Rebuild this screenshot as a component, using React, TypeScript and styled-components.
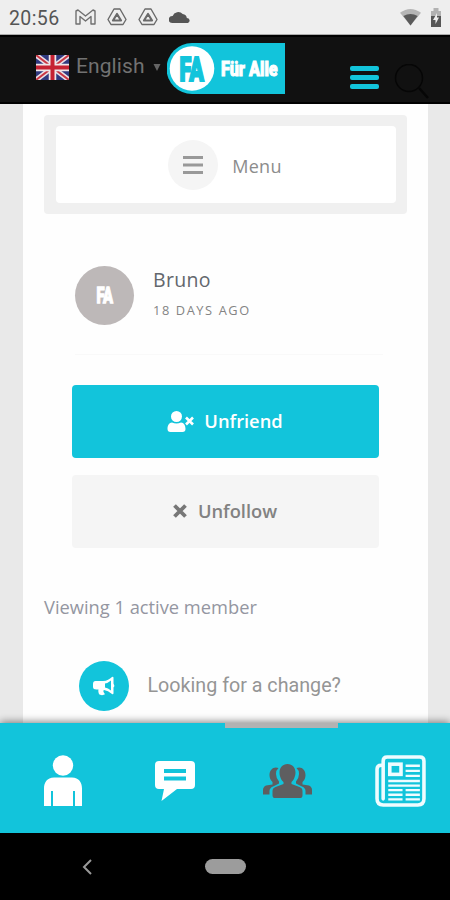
import React from "react";
import styled, { createGlobalStyle } from "styled-components";

const cyan = "#12c4db";

const GlobalStyle = createGlobalStyle`
  * { box-sizing: border-box; }
  body { margin: 0; background: #e9e9e9; font-family: "Open Sans", sans-serif; }
  svg { display: block; flex: none; }
`;

const Screen = styled.div`
  width: 450px;
  height: 900px;
  display: flex;
  flex-direction: column;
  overflow: hidden;
`;

const StatusBar = styled.div`
  height: 35px;
  flex: none;
  display: flex;
  align-items: center;
  padding: 0 8px 0 9px;
  background: #eeeeee;
  border-bottom: 1px solid #ababab;
`;

const Clock = styled.span`
  width: 66px;
  padding-top: 3px;
  font: 400 19.5px/31px Roboto, sans-serif;
  letter-spacing: 0.4px;
  color: #555;
`;

const StatusIcons = styled.div<{ $end?: boolean; $gap: number }>`
  display: flex;
  align-items: center;
  gap: ${(p) => p.$gap}px;
  margin-left: ${(p) => (p.$end ? "auto" : "0")};
`;

const Header = styled.header`
  height: 69px;
  flex: none;
  display: flex;
  align-items: flex-start;
  padding: 8px 20px 0 36px;
  background: #111;
  border-top: 2px solid #000;
  border-bottom: 2px solid #000;
`;

const Language = styled.button`
  width: 131px;
  height: 44px;
  flex: none;
  display: flex;
  align-items: center;
  padding: 0;
  border: 0;
  background: none;
  color: #727272;
  font: 400 21px/42px Roboto, sans-serif;
  letter-spacing: 0.1px;
  text-align: left;
`;

const LanguageName = styled.span`
  width: 77px;
  margin-left: 7px;
  padding-bottom: 2px;
`;

const LogoBox = styled.div`
  margin-top: -2px;
`;

const HeaderActions = styled.div`
  display: flex;
  gap: 13px;
  margin: 19px 0 0 65px;
`;

const Burger = styled.div`
  width: 29px;
  display: flex;
  flex-direction: column;
  gap: 4px;
  padding-top: 2px;
`;

const BurgerBar = styled.span`
  height: 5px;
  border-radius: 2px;
  background: ${cyan};
`;

const Content = styled.main`
  flex: 1;
  min-height: 0;
  width: 405px;
  margin-left: 23px;
  padding: 11px 21px 0;
  background: #fefefe;
  overflow: hidden;
`;

const MenuFrame = styled.div`
  width: 363px;
  height: 99px;
  padding: 11px 11px 11px 12px;
  border-radius: 4px;
  background: #f0f0f0;
`;

const MenuButton = styled.div`
  height: 77px;
  display: flex;
  align-items: center;
  justify-content: center;
  gap: 14px;
  padding: 0 2px 0 0;
  border-radius: 4px;
  background: #fff;
  color: #8c8c8c;
  font-size: 18px;
  font-weight: 500;
  letter-spacing: 0.25px;
`;

const MenuCircle = styled.span`
  width: 50px;
  height: 50px;
  display: flex;
  align-items: center;
  justify-content: center;
  border-radius: 50%;
  background: #f5f5f5;
`;

const MenuText = styled.span`
  padding-top: 2px;
`;

const Member = styled.section`
  height: 89px;
  display: flex;
  margin: 52px 24px 0 31px;
  border-bottom: 1px solid #f9f9f9;
`;

const Avatar = styled.div`
  width: 59px;
  height: 59px;
  border-radius: 50%;
  background: #bdb8b8;
`;

const MemberInfo = styled.div`
  margin-left: 19px;
`;

const MemberName = styled.div`
  font-size: 19.5px;
  font-weight: 500;
  line-height: 28px;
  color: #63676d;
  letter-spacing: 0.3px;
`;

const MemberTime = styled.div`
  margin-top: 7px;
  font-size: 12.8px;
  font-weight: 500;
  line-height: 18px;
  letter-spacing: 1.6px;
  color: #848484;
`;

const Actions = styled.div`
  width: 307px;
  display: flex;
  flex-direction: column;
  gap: 17px;
  margin: 30px 0 0 28px;
`;

const ActionButton = styled.button<{ $primary?: boolean }>`
  height: 73px;
  display: flex;
  align-items: center;
  justify-content: center;
  gap: ${(p) => (p.$primary ? 10 : 11)}px;
  padding: 0 1px 1px 0;
  border: 0;
  border-radius: 4px;
  background: ${(p) => (p.$primary ? cyan : "#f5f5f5")};
  color: ${(p) => (p.$primary ? "#fff" : "#828282")};
  font: 600 18.3px/24px "Open Sans", sans-serif;
`;

const Summary = styled.p`
  margin: 46px 0 0;
  font-size: 18.3px;
  line-height: 26px;
  color: #9496a1;
`;

const Announcement = styled.div`
  display: flex;
  align-items: center;
  gap: 18.5px;
  margin: 41px 0 0 35px;
  color: #959595;
  font: 400 19.7px/24px Roboto, sans-serif;
`;

const AnnouncementText = styled.span`
  padding-bottom: 1px;
`;

const AnnouncementIcon = styled.span`
  width: 50px;
  height: 50px;
  display: flex;
  align-items: center;
  justify-content: center;
  border-radius: 50%;
  background: ${cyan};
`;

const TabBar = styled.nav`
  height: 110px;
  flex: none;
  display: grid;
  grid-template-columns: repeat(4, 112.5px);
  background: ${cyan};
  box-shadow: 0 -1px 8px rgba(0, 0, 0, 0.5);
  z-index: 1;
`;

const Tab = styled.div<{ $active?: boolean }>`
  display: flex;
  align-items: center;
  justify-content: center;
  padding: 5px 0 0 13px;
  box-shadow: ${(p) => (p.$active ? "inset 0 5px 0 #b2b2b2" : "none")};
`;

const SystemBar = styled.footer`
  height: 67px;
  flex: none;
  display: flex;
  align-items: center;
  padding-left: 82px;
  background: #000;
`;

const HomePill = styled.span`
  width: 41px;
  height: 15px;
  margin-left: 112px;
  border-radius: 8px;
  background: #9c9c9c;
`;

const LogoText = styled.text`
  font-family: Roboto, "Open Sans", sans-serif;
  font-weight: 900;
  stroke-linejoin: miter;
`;

const DriveIcon = () => (
  <svg width="20" height="18" viewBox="0 0 20 18" fill="none" stroke="#6a6a6a" strokeWidth="1.4" strokeLinejoin="round">
    <path d="M7 1h6l6 10.5-3 5H4l-3-5z" />
    <path d="M10 6 6 12.500h8z" strokeWidth="2.2" />
  </svg>
);

const Flag = () => (
  <svg width="33" height="25" viewBox="0 0 33 25">
    <path fill="#30397f" d="M0 0h33v25H0z" />
    <path d="m0 0 33 25M33 0 0 25" stroke="#e9dfe6" strokeWidth="5" />
    <path d="m0 0 33 25M33 0 0 25" stroke="#c93643" strokeWidth="2" />
    <path d="M16.5 0v25M0 12.5h33" stroke="#eee5e8" strokeWidth="7.5" />
    <path d="M16.5 0v25M0 12.5h33" stroke="#c62233" strokeWidth="4" />
  </svg>
);

const Logo = () => (
  <svg width="118" height="51" viewBox="0 0 118 51">
    <path fill={cyan} d="M25 0h93v51H25a25.5 25.5 0 0 1 0-51z" />
    <circle cx="25" cy="25.5" r="22.3" fill="#fff" />
    <LogoText transform="translate(12.500 37.500) scale(.64 1)" fontSize="33.500" fill={cyan} stroke={cyan} strokeWidth="2">FA</LogoText>
    <LogoText transform="translate(54 33) scale(.77 1)" fontSize="21" fill="#fff" stroke="#fff" strokeWidth="1">Für Alle</LogoText>
  </svg>
);

export default function App() {
  return (
    <Screen>
      <GlobalStyle />
      <StatusBar>
        <Clock>20:56</Clock>
        <StatusIcons $gap={11}>
          <svg width="21" height="16" viewBox="0 0 21 16" fill="none" stroke="#707070" strokeWidth="1.4" strokeLinejoin="round">
            <path d="M1 15V2l2-1 7.500 6L18 1l2 1v13h-4V7.500L10.500 12 5 7.500V15z" />
          </svg>
          <DriveIcon />
          <DriveIcon />
          <svg width="21" height="12" viewBox="0 0 20 12" preserveAspectRatio="none" fill="#555">
            <path d="M3 12a3.500 3.500 0 0 1 .5-7A5.500 5.500 0 0 1 13 3a4.500 4.500 0 0 1 4 4 2.600 2.600 0 0 1 1 5z" />
          </svg>
        </StatusIcons>
        <StatusIcons $gap={9} $end>
          <svg width="21" height="18" viewBox="0 0 22 18">
            <path fill="#b5b5b5" d="M0 4.500Q11-3.500 22 4.500L11 18z" />
            <path fill="#5a5a5a" d="M3.500 8Q11 3.500 18.500 8L11 18z" />
          </svg>
          <svg width="12" height="19" viewBox="0 0 12 19">
            <path fill="#b2b2b2" d="M1 3h2.500V0h5v3H11v5H1z" />
            <path fill="#565656" d="M1 8h10v11H1z" />
            <path fill="#eee" d="M7 5 3 12h2.500v4L9 9.500H7z" />
          </svg>
        </StatusIcons>
      </StatusBar>

      <Header>
        <Language>
          <Flag />
          <LanguageName>English</LanguageName>
          <svg width="8" height="7" viewBox="0 0 8 7"><path fill="#656565" d="M.5 0h7L4 7z" /></svg>
        </Language>
        <LogoBox><Logo /></LogoBox>
        <HeaderActions>
          <Burger><BurgerBar /><BurgerBar /><BurgerBar /></Burger>
          <svg width="37" height="38" viewBox="0 0 37 38" fill="none" stroke="#060606" strokeWidth="1.500">
            <circle cx="17" cy="14" r="13.500" /><path d="m27 24 9 10" strokeWidth="2.500" />
          </svg>
        </HeaderActions>
      </Header>

      <Content>
        <MenuFrame>
          <MenuButton>
            <MenuCircle>
              <svg width="20" height="18" viewBox="0 0 20 18"><path d="M0 1.500h20M0 9h20M0 16.500h20" stroke="#999" strokeWidth="3" /></svg>
            </MenuCircle>
            <MenuText>Menu</MenuText>
          </MenuButton>
        </MenuFrame>

        <Member>
          <Avatar>
            <svg width="59" height="59" viewBox="0 0 59 59">
              <LogoText transform="translate(21.500 36.500) scale(.65 1)" fontSize="22.500" fill="#fff" stroke="#fff" strokeWidth="1.300">FA</LogoText>
            </svg>
          </Avatar>
          <MemberInfo>
            <MemberName>Bruno</MemberName>
            <MemberTime>18 DAYS AGO</MemberTime>
          </MemberInfo>
        </Member>

        <Actions>
          <ActionButton $primary>
            <svg width="27" height="21" viewBox="0 0 27 21" fill="#fff">
              <circle cx="9.500" cy="5.500" r="5.500" />
              <path d="M5 11.500q4.500 2 9 0c3 0 4.500 3 4.500 6.500q0 3-3 3h-12q-3 0-3-3c0-3.500 1.500-6.500 4.500-6.500z" />
              <path d="m19 6.500 7 7m0-7-7 7" stroke="#fff" strokeWidth="2.600" />
            </svg>
            Unfriend
          </ActionButton>
          <ActionButton>
            <svg width="14" height="14" viewBox="0 0 14 14"><path d="m1.500 1.500 11 11m0-11-11 11" stroke="#777" strokeWidth="3.800" /></svg>
            Unfollow
          </ActionButton>
        </Actions>

        <Summary>Viewing 1 active member</Summary>
        <Announcement>
          <AnnouncementIcon>
            <svg width="22" height="20" viewBox="0 0 22 20">
              <path fill="#fff" fillRule="evenodd" d="M2.500 5H10c4 0 6.500-2 9-4q1.500-1 1.500 1v5.500q1.500 2 0 4V17q0 2-1.500 1-4-3.500-8-4c-1.500 1 0 2 0 3l1 1c-1 1.500-5 1.500-6 0-.5-1.500-1-3-.5-4.500h-2Q0 13.500 0 11V8q0-3 2.500-3zM12 7.500v4q3 .5 6 3V4.500q-3 2.500-6 3z" />
            </svg>
          </AnnouncementIcon>
          <AnnouncementText>Looking for a change?</AnnouncementText>
        </Announcement>
      </Content>

      <TabBar>
        <Tab>
          <svg width="38" height="52" viewBox="0 0 38 52" fill="#fff">
            <circle cx="19" cy="10.500" r="10.200" />
            <path d="M10 22.500h18c7 0 10 5 10 11V51h-7V36h-2v15H9V36H7v15H0V33.500c0-6 3-11 10-11z" />
          </svg>
        </Tab>
        <Tab>
          <svg width="40" height="42" viewBox="0 0 40 42">
            <path fill="#fff" d="M4 1h32q4 0 4 4v20q0 4-4 4H22L6.500 41 9 29H4q-4 0-4-4V5q0-4 4-4z" />
            <path stroke={cyan} strokeWidth="4" d="M9 11h22M9 18.500h22" />
          </svg>
        </Tab>
        <Tab $active>
          <svg width="49" height="36" viewBox="0 0 49 36" fill="#5e5e60">
            <path d="M15.500 5c-5-2-9 2-9 7 0 3 1 5 3 7v2.500L3 22.500Q0 24 0 27v4.500h6.500V28q0-3 3.500-4.500l6-3v-2q-3-3.500-3-7.500t2.500-6z" />
            <path d="M33.500 5c5-2 9 2 9 7 0 3-1 5-3 7v2.500l6.500 1q3 1.500 3 4.500v4.500h-6.500V28q0-3-3.500-4.500l-6-3v-2q3-3.500 3-7.500t-2.500-6z" />
            <path d="M24.500 1c5 0 8 4 8 8.500 0 4-2 8-4 9.500v2l8 3q3 1 3 4v4q0 3-2 3h-26q-2 0-2-3v-4q0-3 3-4l8-3v-2c-2-1.500-4-5.500-4-9.500C16.500 5 19.500 1 24.500 1z" />
          </svg>
        </Tab>
        <Tab>
          <svg width="51" height="52" viewBox="0 0 50 51" fill="none" stroke="#effcff">
            <path d="M8 10H6q-4 0-4 4v29q0 6 6 6h34q6 0 6-6V6q0-4-4-4H12Q8 2 8 6v37" strokeWidth="3.500" strokeLinecap="round" />
            <rect x="14.500" y="9" width="11" height="10" strokeWidth="3.500" />
            <path d="M30 10.500h14M30 15.500h14M30 20.500h14M13 25.500h31M13 30h31M13 34.500h14M30 34.500h14M13 39h14M30 39h14M13 43.500h14M30 43.500h14" strokeWidth="2.300" />
          </svg>
        </Tab>
      </TabBar>

      <SystemBar>
        <svg width="11" height="16" viewBox="0 0 11 16" fill="none" stroke="#999" strokeWidth="2"><path d="M9 1 2 8l7 7" /></svg>
        <HomePill />
      </SystemBar>
    </Screen>
  );
}
